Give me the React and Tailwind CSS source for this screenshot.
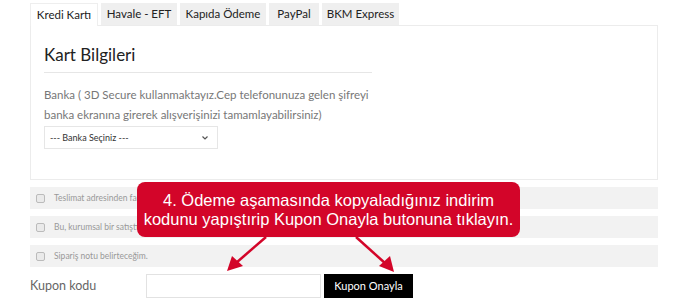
import React from "react";

export default function App() {
  const tabs = [
    { t: "Kredi Kartı", w: "w-[68px]", active: true },
    { t: "Havale - EFT", w: "w-[76px]" },
    { t: "Kapıda Ödeme", w: "w-[86px]" },
    { t: "PayPal", w: "w-[50px]" },
    { t: "BKM Express", w: "w-[77px]" },
  ];
  const rows = [
    "Teslimat adresinden farklı bir fatura adresi kullanmak istiyorum.",
    "Bu, kurumsal bir satıştır.",
    "Sipariş notu belirteceğim.",
  ];
  return (
    <div className="relative w-[690px] h-[300px] bg-white overflow-hidden" style={{ fontFamily: "Lato, 'Open Sans', sans-serif" }}>
      <div className="pl-[30px] pt-[3px]">
        <div className="flex gap-[3px] h-[22px]">
          {tabs.map((x) => (
            <div
              key={x.t}
              className={`${x.w} h-[22px] flex items-center justify-center text-[11.5px] text-[#222] ${x.active ? "bg-white border-t border-l border-r border-[#eeeeee] relative z-10 h-[23px]" : "bg-[#efefef]"}`}
            >
              {x.t}
            </div>
          ))}
        </div>
        <div className="w-[628px] h-[155px] border border-[#ececec] pl-[13px] pt-[18px]">
          <div className="text-[17px] text-[#222] leading-[22px]">Kart Bilgileri</div>
          <div className="w-[328px] h-px bg-[#e6e6e6] mt-[6px]"></div>
          <div className="mt-[12px] text-[11.5px] text-[#777] leading-[20px] w-[340px]">
            Banka ( 3D Secure kullanmaktayız.Cep telefonunuza gelen şifreyi banka ekranına girerek alışverişinizi tamamlayabilirsiniz)
          </div>
          <div className="mt-[1px] w-[174px] h-[23px] border border-[#e6e6e6] flex items-center justify-between px-[5px] text-[9px] text-[#333]">
            <span>--- Banka Seçiniz ---</span>
            <svg width="8" height="6" viewBox="0 0 8 6" className="mr-[3px]">
              <path d="M1.5 1.5 L4 4 L6.5 1.5" fill="none" stroke="#555" strokeWidth="1.2" />
            </svg>
          </div>
        </div>
        <div className="mt-[7px] flex flex-col gap-[7px] w-[628px]">
          {rows.map((r) => (
            <div key={r} className="h-[22px] bg-[#f2f2f2] flex items-center pl-[6px] text-[8.5px] text-[#999] whitespace-nowrap overflow-hidden">
              <div className="w-[9px] h-[9px] border border-[#bbb] rounded-[2px] bg-[#eaeaea] mr-[9px]"></div>
              {r}
            </div>
          ))}
        </div>
        <div className="mt-[7px] flex items-center">
          <div className="w-[116px] text-[12.5px] text-[#666]">Kupon kodu</div>
          <div className="w-[175px] h-[24px] border border-[#e2e2e2] bg-white"></div>
          <div className="ml-[3px] w-[89px] h-[24px] bg-black text-white text-[11px] flex items-center justify-center">
            Kupon Onayla
          </div>
        </div>
      </div>

      <div
        className="absolute left-[137px] top-[182px] w-[383px] h-[55px] bg-[#d30529] rounded-[8px] text-white text-[16.5px] leading-[19px] flex flex-col items-center justify-center text-center z-20"
        style={{ fontFamily: "'Liberation Sans', Arial, sans-serif" }}
      >
        <div>4. Ödeme aşamasında kopyaladığınız indirim</div>
        <div>kodunu yapıştırip Kupon Onayla butonuna tıklayın.</div>
      </div>
      <svg className="absolute left-0 top-0 z-30 pointer-events-none" width="690" height="300" viewBox="0 0 690 300">
        <line x1="266" y1="237" x2="236" y2="263" stroke="#d30529" strokeWidth="2.5" />
        <polygon points="227,271 232,256 243,266" fill="#d30529" />
        <line x1="356" y1="237" x2="386" y2="264" stroke="#d30529" strokeWidth="2.5" />
        <polygon points="394,272 379,266 390,256" fill="#d30529" />
      </svg>
    </div>
  );
}
